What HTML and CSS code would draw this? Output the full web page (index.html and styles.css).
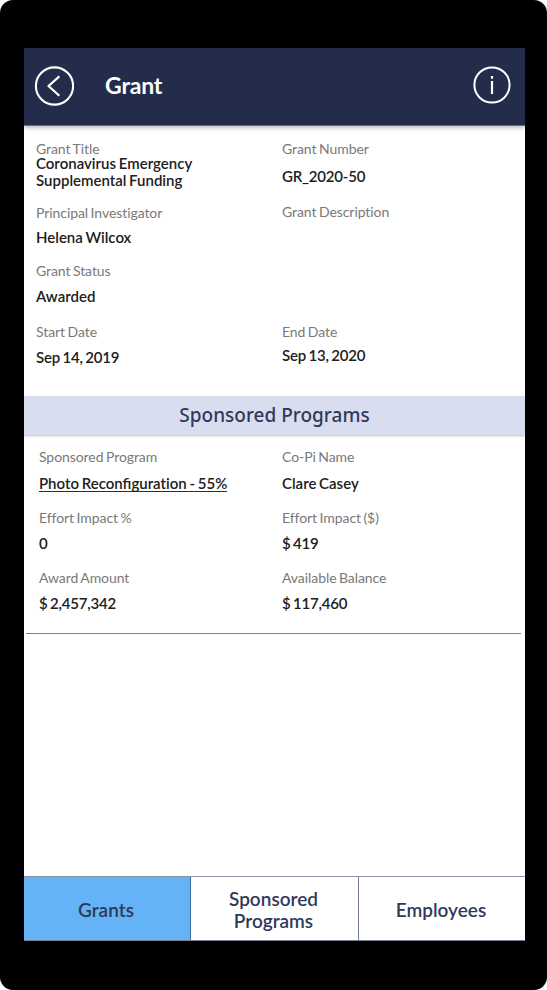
FILE: index.html
```html
<!DOCTYPE html>
<html lang="en">
<head>
<meta charset="utf-8">
<title>Grant</title>
<link rel="stylesheet" href="styles.css">
</head>
<body>
<div class="device">
  <main class="screen">
    <header class="header">
      <svg class="back" viewBox="0 0 40 40" fill="none" stroke="#fff"><circle cx="20.5" cy="20" r="18.6" stroke-width="2.1"/><path d="M24.5 11.2 L14.5 20 L24.5 29" stroke-width="2.3" stroke-linecap="square" stroke-linejoin="round"/></svg>
      <h1 class="title">Grant</h1>
      <svg class="info" viewBox="0 0 38 38" fill="none" stroke="#fff"><circle cx="19" cy="19" r="17.6" stroke-width="2"/><path d="M19 10v2.7M19 15v13" stroke-width="2.2"/></svg>
    </header>
    <section class="details">
      <dl class="col">
        <div class="field title-field"><dt>Grant Title</dt><dd>Coronavirus Emergency<br>Supplemental Funding</dd></div>
        <div class="field investigator"><dt>Principal Investigator</dt><dd>Helena Wilcox</dd></div>
        <div class="field status"><dt>Grant Status</dt><dd>Awarded</dd></div>
        <div class="field start"><dt>Start Date</dt><dd class="numeric">Sep 14, 2019</dd></div>
      </dl>
      <dl class="col">
        <div class="field number"><dt>Grant Number</dt><dd class="numeric">GR_2020-50</dd></div>
        <div class="field description"><dt>Grant Description</dt><dd></dd></div>
        <div class="field end"><dt>End Date</dt><dd class="numeric">Sep 13, 2020</dd></div>
      </dl>
    </section>
    <h2 class="section-title">Sponsored Programs</h2>
    <section class="program">
      <dl class="program-grid">
        <div class="field"><dt>Sponsored Program</dt><dd><span class="link">Photo Reconfigurat&zwnj;ion - 55%</span></dd></div>
        <div class="field"><dt>Co-Pi Name</dt><dd>Clare Casey</dd></div>
        <div class="field effort"><dt>Effort Impact %</dt><dd>0</dd></div>
        <div class="field effort"><dt>Effort Impact ($)</dt><dd class="numeric">$ 419</dd></div>
        <div class="field amount"><dt>Award Amount</dt><dd class="numeric">$ 2,457,342</dd></div>
        <div class="field amount"><dt>Available Balance</dt><dd class="numeric">$ 117,460</dd></div>
      </dl>
    </section>
    <nav class="tabs">
      <a class="tab active">Grants</a>
      <a class="tab">Sponsored<br>Programs</a>
      <a class="tab">Employees</a>
    </nav>
  </main>
</div>
</body>
</html>
```
FILE: styles.css
```css
* { box-sizing: border-box; margin: 0; padding: 0; }
body { background: #fff; font-family: Lato, "Liberation Sans", sans-serif; color: #202020; }
.device { width: 547px; height: 990px; padding: 48px 22px 49px 24px; background: #000; border-radius: 13px; }
.screen { display: flex; flex-direction: column; height: 893px; background: #fff; }
.header { display: flex; align-items: center; height: 78px; flex: none; padding: 0 14px 1px 10px; background: #242c4b; border-bottom: 1px solid #676c82; box-shadow: 0 2px 4px rgba(0,0,0,.25); }
.back { width: 40px; height: 40px; }
.title { flex: 1; margin: -2px 0 0 31px; color: #fff; font-size: 23px; line-height: 28px; font-weight: 700; letter-spacing: -.15px; }
.info { width: 38px; height: 38px; margin-top: -2px; }
.details { display: grid; grid-template-columns: 246px 1fr; height: 270px; flex: none; padding: 15px 0 0 12px; }
dt { font-size: 14px; line-height: 15px; color: #797979; letter-spacing: -.07px; word-spacing: -1px; }
dd { font-size: 15px; line-height: 17px; font-weight: 600; color: #202020; word-spacing: -1px; }
.numeric { letter-spacing: -.2px; }
.title-field dd { margin-top: -1px; }
.investigator { margin-top: 16px; }
.investigator dd { margin-top: 9px; }
.status { margin-top: 17px; }
.status dd { margin-top: 10px; }
.start { margin-top: 19px; }
.start dd { margin-top: 10px; }
.number dd { margin-top: 12px; }
.description { height: 101px; margin-top: 19px; }
.end { margin-top: 19px; }
.end dd { margin-top: 8px; }
.section-title { height: 39px; flex: none; background: #d8def0; color: #303959; font: 500 19px/39px "Noto Sans", sans-serif; text-align: center; box-shadow: 0 1px 2px rgba(0,0,0,.25); }
.program { flex: 1; }
.program-grid { display: grid; grid-template-columns: 243px 1fr; height: 199px; margin: 0 4px 0 2px; padding: 14px 0 0 13px; align-content: start; border-bottom: 1px solid #77809a; }
.program-grid dd { margin-top: 11px; }
.program-grid .effort { margin-top: 18px; }
.program-grid .effort dd { margin-top: 10px; }
.program-grid .amount { margin-top: 18px; }
.program-grid .amount dd { margin-top: 10px; }
.link { border-bottom: 1px solid #303030; display: inline-block; height: 17px; }
.tabs { display: grid; grid-template-columns: 167px 168px 1fr; height: 65px; border-top: 1px solid #8b91a5; border-bottom: 1px solid #777d8e; }
.tab { display: flex; align-items: center; justify-content: center; padding: 3px 2px 0 0; border-right: 1px solid #737b94; color: #303959; font-size: 19px; line-height: 22px; font-weight: 600; text-align: center; }
.tab:last-child { border-right: 0; }
.tab.active { background: #63b3f6; border-right-color: #416f9d; }
```
